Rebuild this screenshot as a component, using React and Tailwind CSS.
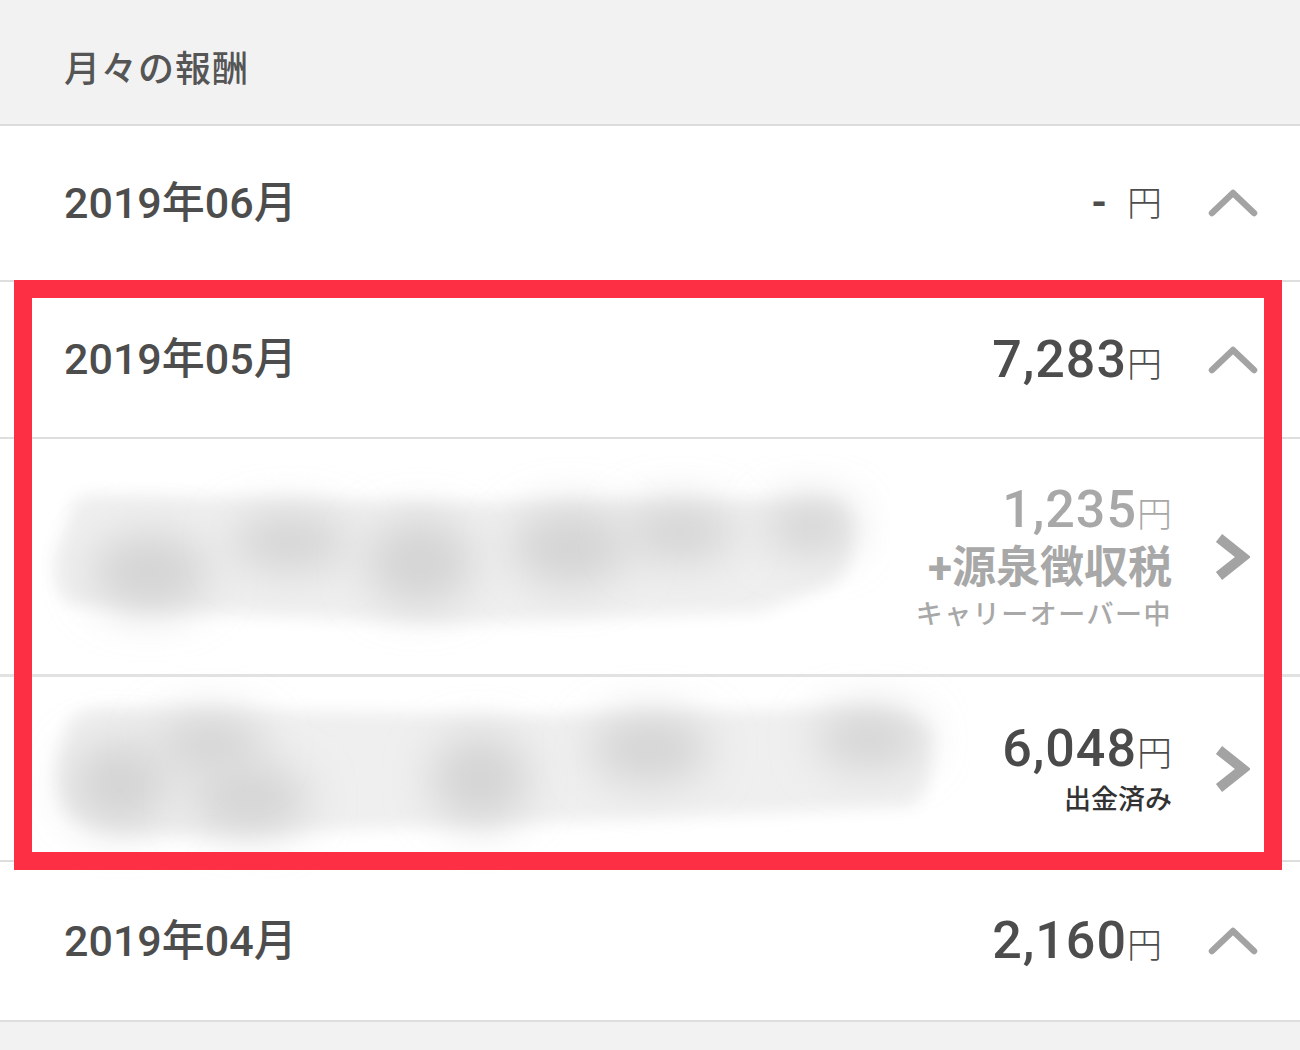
import React from "react";

const FONT = { fontFamily: 'Roboto, "Noto Sans CJK JP", sans-serif' };

function ChevronUp() {
    return (
        <svg width="50" height="30" viewBox="0 0 50 30" className="shrink-0">
            <polyline points="4,25 25,5 46,25" fill="none" stroke="#a3a3a3" strokeWidth="6.5" strokeLinecap="round" strokeLinejoin="round" />
        </svg>
    );
}

function ChevronRight() {
    return (
        <svg width="38" height="48" viewBox="0 0 38 48" className="shrink-0">
            <polyline points="7,5 31,24 7,43" fill="none" stroke="#a3a3a3" strokeWidth="10" strokeLinejoin="miter" />
        </svg>
    );
}

// blurred (masked) title, drawn as a soft scribble; PAD keeps the blur from being clipped
const PAD = 30;

function Blob({ width, height, shape, spots, id }) {
    return (
        <svg
            width={width + PAD * 2}
            height={height + PAD * 2}
            viewBox={`0 0 ${width + PAD * 2} ${height + PAD * 2}`}
            className="shrink-0 -my-[30px]"
        >
            <defs>
                <filter id={id} x="-20%" y="-40%" width="140%" height="180%">
                    <feGaussianBlur stdDeviation="8" />
                </filter>
                <filter id={id + "s"} x="-80%" y="-80%" width="260%" height="260%">
                    <feGaussianBlur stdDeviation="22" />
                </filter>
            </defs>
            <g transform={`translate(${PAD},${PAD})`}>
                <path d={shape} fill="#efefef" filter={`url(#${id})`} />
                {spots.map(([cx, cy, rx, ry], i) => (
                    <ellipse key={i} cx={cx} cy={cy} rx={rx} ry={ry} fill="#d4d4d4" filter={`url(#${id}s)`} />
                ))}
            </g>
        </svg>
    );
}

function MonthRow({ label, amount, dash, className = "" }) {
    return (
        <div className={`flex items-center pl-16 pr-[42px] border-b-2 border-[#dedede] ${className}`}>
            <span className="flex-1 text-[43px] font-medium text-[#4d4d4d]">{label}</span>
            <span className="flex items-baseline text-[#4d4d4d]">
                {dash ? (
                    <span className="text-[40px] font-bold mr-5">-</span>
                ) : (
                    <span className="text-[52px] font-medium tracking-[1px]">{amount}</span>
                )}
                <span className="text-[35px] font-light">円</span>
            </span>
            <span className="ml-[46px]">
                <ChevronUp />
            </span>
        </div>
    );
}

export default function App() {
    return (
        <div className="relative w-[1300px] h-[1050px] bg-[#f2f2f2] overflow-hidden" style={FONT}>
            {/* header */}
            <div className="h-[126px] flex items-center pl-16 pt-4 border-b-2 border-[#dcdcdc]">
                <span className="text-[36px] font-medium text-[#555] tracking-[1px]">月々の報酬</span>
            </div>

            <div className="bg-white">
                <MonthRow label="2019年06月" dash className="h-[156px]" />
                <MonthRow label="2019年05月" amount="7,283" className="h-[157px]" />

                {/* detail 1 */}
                <div className="h-[238px] flex items-center pl-[10px] pr-[50px] border-b-[3px] border-[#e2e2e2]">
                    <div className="flex-1 flex items-center">
                        <Blob
                            id="b1"
                            width={820}
                            height={170}
                            shape="M30,40 Q30,22 60,22 L400,30 L790,28 Q815,30 812,70 Q810,110 780,118 L720,140 L420,152 Q200,145 30,132 Q10,120 14,85 Z"
                            spots={[
                                [110, 100, 60, 40],
                                [250, 70, 60, 30],
                                [380, 90, 55, 45],
                                [530, 75, 60, 40],
                                [640, 60, 55, 30],
                                [770, 55, 45, 28],
                            ]}
                        />
                    </div>
                    <div className="flex flex-col items-end text-[#a8a8a8]">
                        <span className="flex items-baseline leading-none">
                            <span className="text-[52px] font-medium tracking-[1px]">1,235</span>
                            <span className="text-[35px] font-light">円</span>
                        </span>
                        <span className="text-[44px] font-bold leading-none mt-[10px]">+源泉徴収税</span>
                        <span className="text-[27px] font-medium leading-none mt-[12px] tracking-[1.5px]">キャリーオーバー中</span>
                    </div>
                    <span className="ml-[40px]">
                        <ChevronRight />
                    </span>
                </div>

                {/* detail 2 */}
                <div className="h-[185px] flex items-center pl-[10px] pr-[50px] border-b-2 border-[#dedede]">
                    <div className="flex-1 flex items-center">
                        <Blob
                            id="b2"
                            width={900}
                            height={160}
                            shape="M30,30 Q40,18 70,18 L480,26 L760,20 Q880,14 890,45 Q895,110 870,118 L600,130 L180,145 Q40,150 25,120 Q8,80 30,30 Z"
                            spots={[
                                [80, 95, 50, 45],
                                [210, 110, 60, 35],
                                [170, 55, 55, 30],
                                [440, 90, 50, 45],
                                [610, 60, 60, 35],
                                [830, 50, 55, 30],
                            ]}
                        />
                    </div>
                    <div className="flex flex-col items-end">
                        <span className="flex items-baseline leading-none text-[#4a4a4a]">
                            <span className="text-[52px] font-medium tracking-[1px]">6,048</span>
                            <span className="text-[35px] font-light">円</span>
                        </span>
                        <span className="text-[27px] font-medium leading-none mt-[12px] text-[#333]">出金済み</span>
                    </div>
                    <span className="ml-[40px]">
                        <ChevronRight />
                    </span>
                </div>

                <MonthRow label="2019年04月" amount="2,160" className="h-[160px]" />
            </div>

            {/* highlight frame */}
            <div className="absolute left-[14px] top-[280px] w-[1268px] h-[590px] border-[18px] border-[#fd2f44]" />
        </div>
    );
}
